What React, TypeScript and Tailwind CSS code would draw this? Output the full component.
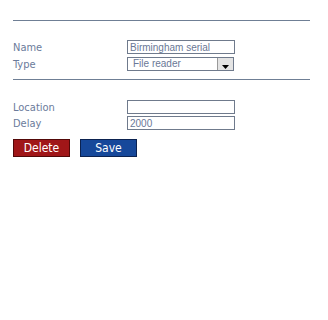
import React from 'react';

const labelCls = "w-[114px] h-[14px] text-[11px] leading-[16px] text-[#6b7b9b]";
const inputCls =
  "w-[108px] h-[14px] border border-[#6f7a8c] bg-white px-[2px] text-[10px] leading-[12px] text-[#6a7896] outline-none";

export default function App() {
  return (
    <div
      className="min-h-screen bg-white px-[13px] pt-[20px]"
      style={{ fontFamily: '"DejaVu Sans Condensed", "DejaVu Sans", sans-serif' }}
    >
      <div className="w-[297px] h-px bg-[#6f7f95]" />

      {/* general */}
      <div className="flex flex-col gap-[3px] pt-[19px]">
        <div className="flex items-center">
          <span className={labelCls}>Name</span>
          <input
            className={inputCls}
            style={{ fontFamily: '"Liberation Sans", Arial, sans-serif' }}
            defaultValue="Birmingham serial"
          />
        </div>
        <div className="flex items-center">
          <span className={labelCls}>Type</span>
          <div className="flex w-[107px] h-[14px] border border-[#6f7a8c] bg-white">
            <span
              className="flex-1 pl-[5px] text-[10px] leading-[12px] text-[#6a7896]"
              style={{ fontFamily: '"Liberation Sans", Arial, sans-serif' }}
            >
              File reader
            </span>
            <span className="w-[16px] h-[12px] bg-[#e4e4e4] border-l border-[#9a9a9a] flex items-end justify-center pb-[1px]">
              <svg width="7" height="4" viewBox="0 0 7 4">
                <path d="M0 0H7L3.5 4Z" fill="#000" />
              </svg>
            </span>
          </div>
        </div>
      </div>

      <div className="w-[297px] h-px bg-[#6f7f95] mt-[8px]" />

      {/* settings */}
      <div className="flex flex-col gap-[2px] pt-[20px]">
        <div className="flex items-center">
          <span className={labelCls}>Location</span>
          <input className={inputCls} defaultValue="" />
        </div>
        <div className="flex items-center">
          <span className={labelCls}>Delay</span>
          <input
            className={inputCls}
            style={{ fontFamily: '"Liberation Sans", Arial, sans-serif' }}
            defaultValue="2000"
          />
        </div>
      </div>

      <div className="flex gap-[10px] mt-[9px]">
        <button className="w-[57px] h-[18px] bg-[#a01618] border border-[#520808] text-white text-[12px] leading-[16px]">
          Delete
        </button>
        <button className="w-[57px] h-[18px] bg-[#16489a] border border-[#0b2250] text-white text-[12px] leading-[16px]">
          Save
        </button>
      </div>
    </div>
  );
}
